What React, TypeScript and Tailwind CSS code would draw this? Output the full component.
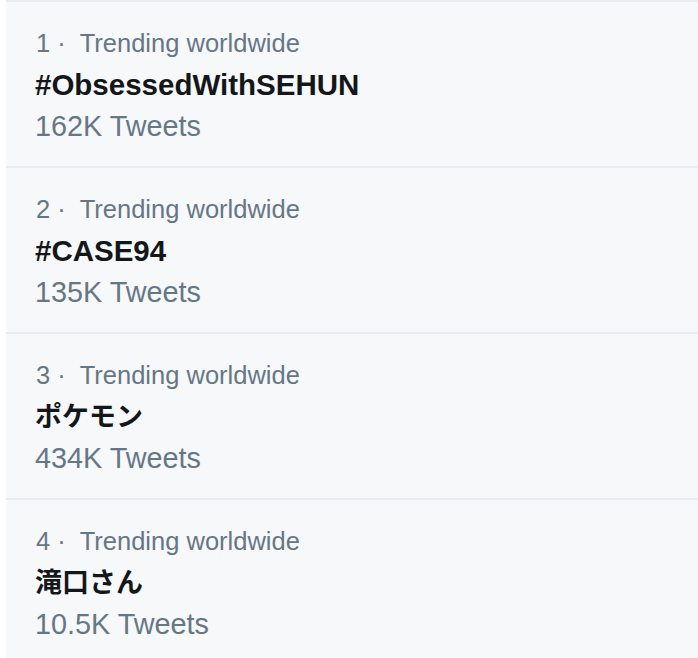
import React from "react";

const trends = [
  { rank: 1, name: "#ObsessedWithSEHUN", count: "162K Tweets", cjk: false },
  { rank: 2, name: "#CASE94", count: "135K Tweets", cjk: false },
  { rank: 3, name: "ポケモン", count: "434K Tweets", cjk: true },
  { rank: 4, name: "滝口さん", count: "10.5K Tweets", cjk: true },
];

export default function App() {
  return (
    <div
      className="w-[698px] h-[658px] overflow-hidden bg-white pl-[6px]"
      style={{ fontFamily: '"Liberation Sans", "Noto Sans CJK JP", sans-serif' }}
    >
      <div className="bg-[#f7f8fa] border-t-2 border-[#e8ebef]">
        {trends.map((t) => (
          <div
            key={t.rank}
            className="h-[166px] border-b-2 border-[#e8ebef] pl-[29px] pt-[23px]"
          >
            <div className="flex items-center text-[25.5px] leading-[36px] text-[#657786]">
              <span className="ml-[1px]">{t.rank}</span>
              <span className="ml-[7px]">·</span>
              <span className="ml-[14px]">Trending worldwide</span>
            </div>
            <div
              className={
                t.cjk
                  ? "text-[27px] leading-[48px] font-bold text-[#14171a]"
                  : "text-[29.5px] leading-[48px] font-bold text-[#14171a]"
              }
            >
              {t.name}
            </div>
            <div className="text-[28.8px] leading-[35px] text-[#657786]">
              {t.count}
            </div>
          </div>
        ))}
      </div>
    </div>
  );
}
